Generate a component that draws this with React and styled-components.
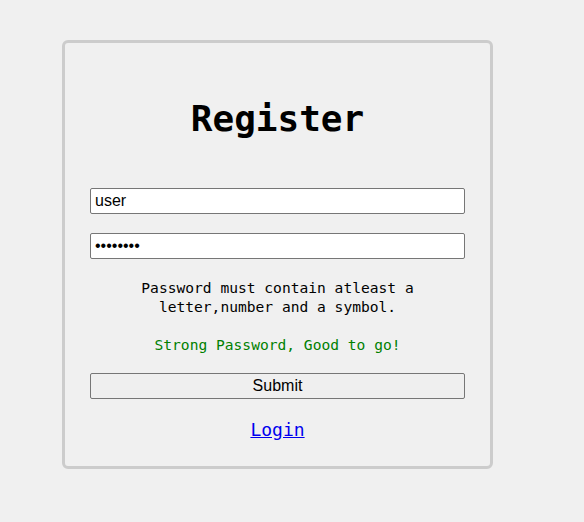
import React from 'react';
import styled, { createGlobalStyle } from 'styled-components';

const GlobalStyle = createGlobalStyle`
  html, body {
    margin: 0;
    background-color: #f0f0f0;
  }
`;

const Page = styled.div`
  min-height: 522px;
  padding: 40px 0 0 62px;
  box-sizing: border-box;
`;

const Card = styled.div`
  width: 431px;
  box-sizing: border-box;
  border: 3px solid #cccccc;
  border-radius: 6px;
  padding: 54px 25px 25px;
  display: flex;
  flex-direction: column;
  align-items: stretch;
  font-family: 'DejaVu Sans Mono', monospace;
`;

const Title = styled.h1`
  margin: 0;
  font-size: 36px;
  line-height: 44px;
  font-weight: bold;
  text-align: center;
  color: #000;
`;

const Field = styled.input`
  display: block;
  box-sizing: border-box;
  width: 100%;
  height: 26px;
  margin: ${(p) => p.$top}px 0 0;
  padding: 0 4px;
  border: 1px solid #767676;
  border-radius: 2px;
  background: #fff;
  font-family: 'Liberation Sans', Arial, sans-serif;
  font-size: 16px;
  color: #000;
  outline: none;
`;

const Note = styled.p`
  margin: ${(p) => p.$top}px 0 0;
  font-size: 14.6px;
  line-height: 19px;
  text-align: center;
  color: ${(p) => p.$color || '#000'};
`;

const SubmitButton = styled.button`
  display: block;
  box-sizing: border-box;
  width: 100%;
  height: 26px;
  margin-top: 19px;
  padding: 0;
  border: 1px solid #767676;
  border-radius: 2px;
  background: #efefef;
  font-family: 'Liberation Sans', Arial, sans-serif;
  font-size: 16px;
  color: #000;
`;

const LoginLink = styled.a`
  align-self: center;
  margin-top: 20px;
  font-size: 18px;
  line-height: 22px;
  color: #0000ee;
  text-decoration: underline;
`;

export default function App() {
  return (
    <>
      <GlobalStyle />
      <Page>
        <Card>
          <Title>Register</Title>
          <Field $top={47} type="text" defaultValue="user" />
          <Field $top={19} type="password" defaultValue="abcd@123" />
          <Note $top={19}>
            Password must contain atleast a letter,number and a symbol.
          </Note>
          <Note $top={19} $color="green">
            Strong Password, Good to go!
          </Note>
          <SubmitButton type="button">Submit</SubmitButton>
          <LoginLink href="#">Login</LoginLink>
        </Card>
      </Page>
    </>
  );
}
